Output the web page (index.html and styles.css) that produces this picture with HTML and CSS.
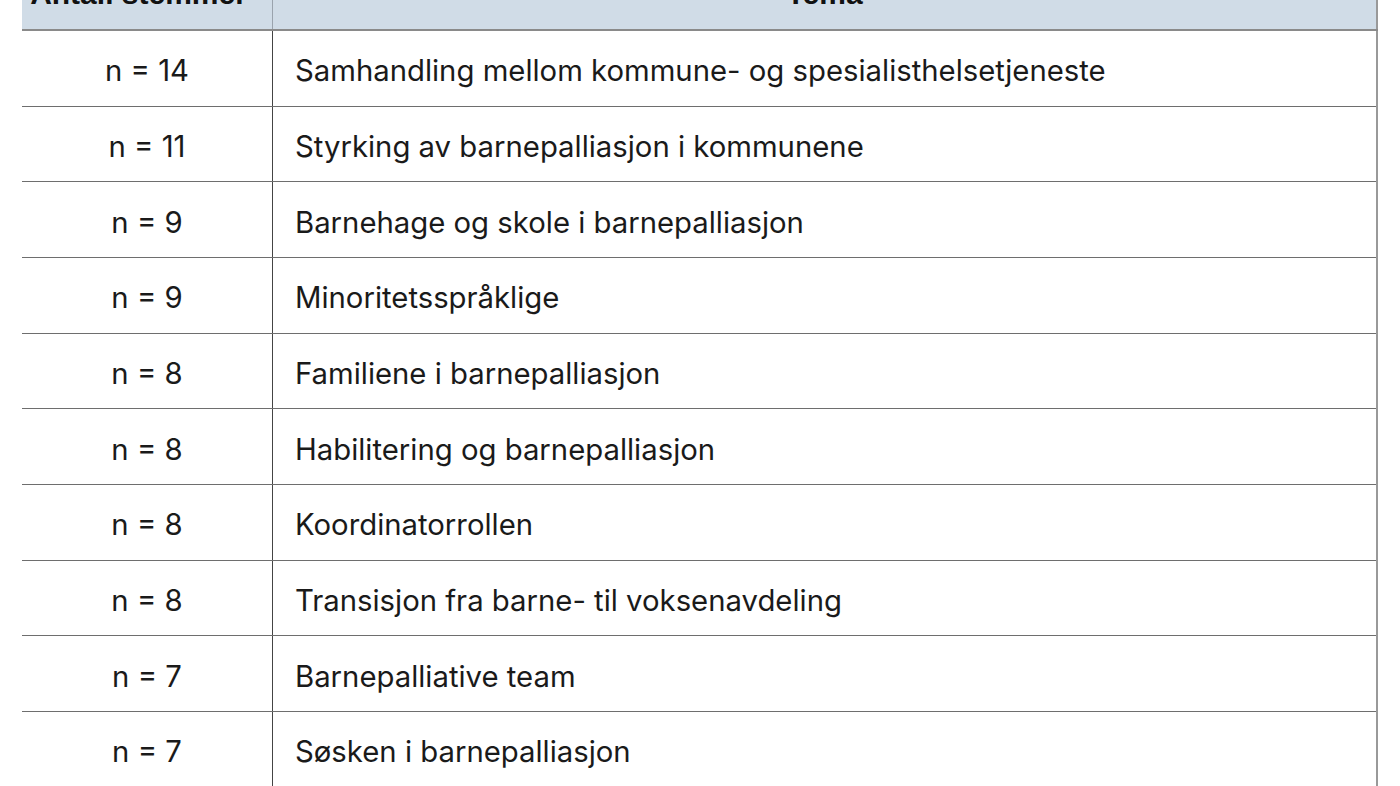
FILE: index.html
```html
<!DOCTYPE html>
<html lang="no">
<head>
<meta charset="utf-8">
<title>Tema</title>
<link rel="stylesheet" href="styles.css">
</head>
<body>
<table class="votes">
  <thead>
    <tr><th class="c1">Antall stemmer</th><th class="c2">Tema</th></tr>
  </thead>
  <tbody>
    <tr><td class="n">n = 14</td><td class="t">Samhandling mellom kommune- og spesialisthelsetjeneste</td></tr>
    <tr><td class="n">n = 11</td><td class="t">Styrking av barnepalliasjon i kommunene</td></tr>
    <tr><td class="n">n = 9</td><td class="t">Barnehage og skole i barnepalliasjon</td></tr>
    <tr><td class="n">n = 9</td><td class="t">Minoritetsspråklige</td></tr>
    <tr><td class="n">n = 8</td><td class="t">Familiene i barnepalliasjon</td></tr>
    <tr><td class="n">n = 8</td><td class="t">Habilitering og barnepalliasjon</td></tr>
    <tr><td class="n">n = 8</td><td class="t">Koordinatorrollen</td></tr>
    <tr><td class="n">n = 8</td><td class="t">Transisjon fra barne- til voksenavdeling</td></tr>
    <tr><td class="n">n = 7</td><td class="t">Barnepalliative team</td></tr>
    <tr><td class="n">n = 7</td><td class="t">Søsken i barnepalliasjon</td></tr>
  </tbody>
</table>
</body>
</html>
```
FILE: styles.css
```css
html, body { margin: 0; padding: 0; background: #fff; overflow: hidden; }
body { width: 1400px; height: 786px; }
.votes {
  border-collapse: collapse;
  margin: -41px 0 0 22px;
  width: 1356px;
  table-layout: fixed;
  font-family: "Inter", "Liberation Sans", sans-serif;
  color: #1a1a1a;
}
.votes th {
  background: #d0dce7;
  font-family: "Liberation Sans", Arial, sans-serif;
  font-weight: bold;
  font-size: 30px;
  line-height: 34px;
  padding: 18px 0;
  text-align: center;
  color: #111;
  border-bottom: 2px solid #8a8a8a;
}
.votes th.c1 { width: 233px; padding-right: 17px; border-right: 1px solid #9aa3ad; }
.votes th.c2 { border-right: 2px solid #999; }
.votes td {
  height: 69.67px;
  padding: 5px 0 0;
  font-size: 29.3px;
  border-bottom: 1px solid #6e6e6e;
  vertical-align: middle;
}
.votes td.n { text-align: center; border-right: 1px solid #444; }
.votes td.t { padding-left: 22px; border-right: 2px solid #999; }
```
